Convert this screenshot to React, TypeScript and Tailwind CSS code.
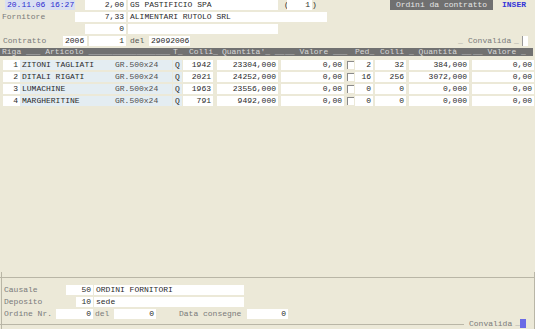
import React from "react";

type BoxProps = { className?: string; children?: React.ReactNode };

// white input field, classic sunken look
const Box = ({ className = "", children }: BoxProps) => (
  <div
    className={`h-[10px] bg-white px-[2px] leading-[10px] whitespace-pre overflow-hidden text-[#2a2a2a] ${className}`}
  >
    {children}
  </div>
);

const Check = () => (
  <div className="mt-[1px] h-[8px] w-[7px] border-t border-l border-[#8a8a8a] bg-white" />
);

const rows = [
  { n: 1, name: "ZITONI TAGLIATI", colli: "1942", qta: "23304,000", ped: "2", colli2: "32", qta2: "384,000" },
  { n: 2, name: "DITALI RIGATI", colli: "2021", qta: "24252,000", ped: "16", colli2: "256", qta2: "3072,000" },
  { n: 3, name: "LUMACHINE", colli: "1963", qta: "23556,000", ped: "0", colli2: "0", qta2: "0,000" },
  { n: 4, name: "MARGHERITINE", colli: "791", qta: "9492,000", ped: "0", colli2: "0", qta2: "0,000" },
];

export default function App() {
  return (
    <div className="flex h-[329px] w-[535px] flex-col bg-[#ece9d8] font-['Liberation_Mono',monospace] text-[8px] text-[#2a2a2a]">
      {/* Top header */}
      <div className="flex h-[10px] leading-[10px]">
        <div className="ml-[5px] w-[70px] bg-[#d9dff2] pl-[2px] text-[#2b2bd0]">20.11.06 16:27</div>
        <Box className="ml-[10px] w-[41px] text-right">2,00</Box>
        <Box className="ml-[2px] w-[150px]">GS PASTIFICIO SPA</Box>
        <span className="ml-[6px] w-[3px]">(</span>
        <Box className="w-[25px] text-right">1</Box>
        <span className="w-[5px]">)</span>
        <div className="ml-[73px] w-[103px] bg-[#707070] text-center text-[#e6e6e6]">Ordini da contratto</div>
        <div className="ml-[8px] px-[1px] font-bold text-[#3434d8]">INSER</div>
      </div>

      <div className="mt-[2px] flex h-[10px] leading-[10px]">
        <span className="ml-[2px] w-[73px] text-[#7a7a7a]">Fornitore</span>
        <Box className="w-[51px] text-right">7,33</Box>
        <Box className="ml-[2px] w-[199px]">ALIMENTARI RUTOLO SRL</Box>
      </div>

      <div className="mt-[2px] flex h-[10px] leading-[10px]">
        <Box className="ml-[85px] w-[41px] text-right">0</Box>
        <Box className="ml-[2px] w-[150px]" />
      </div>

      <div className="mt-[2px] flex h-[10px] leading-[10px]">
        <span className="ml-[3px] w-[60px] text-[#7a7a7a]">Contratto</span>
        <Box className="w-[24px]">2006</Box>
        <Box className="ml-[2px] w-[37px] text-right">1</Box>
        <span className="ml-[4px] w-[19px] text-[#555]">del</span>
        <Box className="w-[41px]">29092006</Box>
        <span className="ml-[268px] w-[10px] text-[#9a9a9a]">_</span>
        <span className="w-[46px] text-[#7a7a7a]">Convalida</span>
        <span className="w-[6px] text-[#9a9a9a]">_</span>
        <div className="ml-[2px] h-[10px] w-[6px] border-l border-[#9a9a9a] bg-white" />
      </div>

      {/* column header */}
      <div className="mt-[2px] flex h-[8px] w-[533px] whitespace-pre bg-[#717171] leading-[8px] text-[#d8d8d8]">
        <span className="ml-[2px] w-[171px]">Riga ___ Articolo _________________</span>
        <span className="w-[10px]">T_</span>
        <span className="w-[36px] pl-[6px]">Colli_</span>
        <span className="w-[66px] pl-[3px]">Quantita'_ __</span>
        <span className="w-[64px]">__ Valore ___</span>
        <span className="w-[26px] pl-[6px]">Ped_</span>
        <span className="w-[34px] pl-[5px]">Colli</span>
        <span className="w-[63px]">_ Quantità __</span>
        <span className="w-[61px] pl-[1px]">__ Valore _</span>
      </div>

      {/* rows */}
      <div className="mt-[4px] flex flex-col gap-[2px]">
        {rows.map((r) => (
          <div key={r.n} className="flex h-[10px] leading-[10px]">
            <Box className="ml-[3px] w-[17px] text-right">{r.n}</Box>
            <div className="flex w-[152px] bg-[#e4edf2] pl-[2px]">
              <span className="w-[93px]">{r.name}</span>
              <span className="text-[#505050]">GR.500x24</span>
            </div>
            <div className="ml-[1px] w-[9px] bg-[#e4edf2] text-center">Q</div>
            <Box className="ml-[1px] w-[30px] text-right">{r.colli}</Box>
            <Box className="ml-[4px] w-[61px] text-right">{r.qta}</Box>
            <Box className="ml-[3px] w-[63px] text-right">0,00</Box>
            <div className="ml-[3px]">
              <Check />
            </div>
            <Box className="ml-[1px] w-[18px] text-right">{r.ped}</Box>
            <Box className="ml-[2px] w-[31px] text-right">{r.colli2}</Box>
            <Box className="ml-[3px] w-[60px] text-right">{r.qta2}</Box>
            <Box className="ml-[3px] w-[62px] text-right">0,00</Box>
          </div>
        ))}
      </div>

      {/* footer group */}
      <div className="ml-[1px] mt-auto flex h-[57px] flex-col border-x border-[#b9b6a6]">
        <div className="h-[5px]" />
        <div className="-ml-[2px] border-t border-[#b9b6a6]" />
        <div className="mt-[7px] flex h-[9px] leading-[9px]">
          <span className="ml-[2px] w-[62px] text-[#7a7a7a]">Causale</span>
          <Box className="h-[9px] w-[27px] text-right leading-[9px]">50</Box>
          <Box className="ml-[1px] h-[9px] w-[150px] leading-[9px]">ORDINI FORNITORI</Box>
        </div>
        <div className="mt-[3px] flex h-[9px] leading-[9px]">
          <span className="ml-[2px] w-[72px] text-[#7a7a7a]">Deposito</span>
          <Box className="h-[9px] w-[17px] text-right leading-[9px]">10</Box>
          <Box className="ml-[1px] h-[9px] w-[150px] leading-[9px]">sede</Box>
        </div>
        <div className="mt-[3px] flex h-[9px] leading-[9px]">
          <span className="ml-[2px] w-[52px] text-[#7a7a7a]">Ordine Nr.</span>
          <Box className="h-[9px] w-[37px] text-right leading-[9px]">0</Box>
          <span className="ml-[2px] w-[19px] text-[#7a7a7a]">del</span>
          <Box className="h-[9px] w-[42px] text-right leading-[9px]">0</Box>
          <span className="ml-[23px] w-[68px] text-[#7a7a7a]">Data consegne</span>
          <Box className="h-[9px] w-[41px] text-right leading-[9px]">0</Box>
        </div>
        <div className="mt-auto flex h-[11px] items-start">
          <div className="-ml-[2px] h-[7px] w-[464px] border-b border-[#b9b6a6]" />
          <span className="ml-[5px] mt-[1px] leading-[9px] text-[#7a7a7a]">Convalida</span>
          <span className="ml-[3px] text-[#9a9a9a] leading-[9px]">_</span>
          <div className="mt-[1px] h-[9px] w-[6px] bg-[#6b6be6]" />
        </div>
      </div>
    </div>
  );
}
